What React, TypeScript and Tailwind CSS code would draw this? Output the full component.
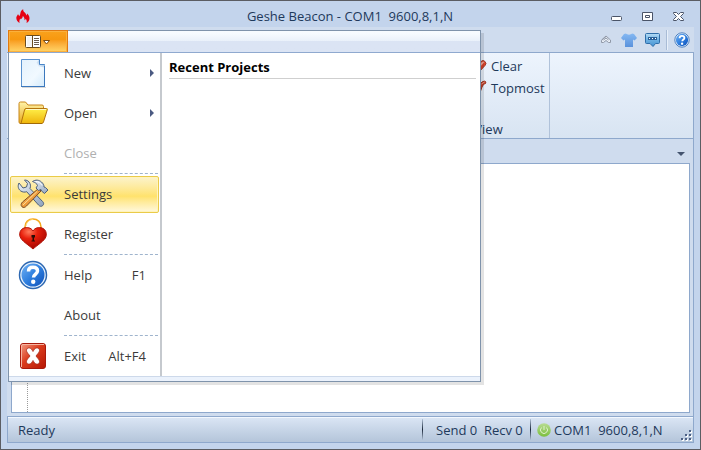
import React from "react";

function FlameIcon() {
  return (
    <svg width="14" height="15" viewBox="0 0 14 15">
      <path
        d="M3.6 14C1.5 13 .2 11 .3 8.8.4 7.2 1.4 6.4 2 5.2c.8.6 1 1.4 1 2C4.200 6.200 4.200 4.600 4.600 3.200 5 1.800 5.800.800 7.200.200c-.2 1.600.6 2.400 1.600 3.400.8.8 1.400 1.800 1.400 2.800.6-.4.9-1.200.8-1.800 1.600 1.400 2.600 3 2.500 5-.1 2-1.200 3.600-3 4.400.6-1.600.2-3-.8-4.200-.2.8-.6 1.200-1.200 1.500.2-1.900-.4-3.300-1.700-4.300 0 1.800-1.200 2.400-2 3.600-.2-.3-.4-.6-.5-1-.8 1.500-1.200 2.900-.7 4.400z"
        fill="#e60012"
      />
    </svg>
  );
}

function AppMenuIcon() {
  return (
    <svg width="26" height="13" viewBox="0 0 26 13">
      <rect x=".5" y=".5" width="15" height="12" rx="1" fill="#fff" stroke="#6b4c1e" />
      <rect x="2" y="2" width="5" height="9" fill="#f3f3f3" />
      <path d="M7.500 1v11" stroke="#6b4c1e" />
      <path d="M9 3.500h5M9 5.500h5M9 7.500h5M9 9.500h5" stroke="#6b5b4c" />
      <path d="M18.500 5.500h6l-3 3.500z" fill="#fff" stroke="#7a4a10" />
    </svg>
  );
}

function NewIcon() {
  return (
    <svg width="28" height="30" viewBox="0 0 28 30">
      <defs>
        <linearGradient id="page" x1="0" y1="0" x2="1" y2="1">
          <stop offset="0" stopColor="#e3f1fc" />
          <stop offset=".6" stopColor="#f1f9ff" />
          <stop offset="1" stopColor="#d3eafb" />
        </linearGradient>
        <linearGradient id="fold" x1="0" y1="1" x2="1" y2="0">
          <stop offset="0" stopColor="#fff" />
          <stop offset="1" stopColor="#7fb0e0" />
        </linearGradient>
      </defs>
      <path d="M3 29.500h24" stroke="#000" opacity=".15" />
      <path d="M2.500 1.500h18v5h5v22h-23z" fill="url(#page)" stroke="#5b93d0" />
      <path d="M20.500 1.500v5h5v3l-6-1-2-4z" fill="url(#fold)" />
      <path d="M20.500 1.500v5h5" fill="none" stroke="#4a86c8" />
      <path d="M2 28.500h24M25.500 8v21" stroke="#3c78bd" />
    </svg>
  );
}

function OpenIcon() {
  return (
    <svg width="30" height="24" viewBox="0 0 30 24">
      <defs>
        <linearGradient id="folder" x1="0" y1="0" x2="0" y2="1">
          <stop offset="0" stopColor="#fff04a" />
          <stop offset="1" stopColor="#eeb40a" />
        </linearGradient>
        <linearGradient id="folderBack" x1="0" y1="0" x2="0" y2="1">
          <stop offset="0" stopColor="#fff3a8" />
          <stop offset="1" stopColor="#e8a91a" />
        </linearGradient>
      </defs>
      <path
        d="M1 21V2.500Q1 1 2.500 1h5L10 4h14q1.500 0 1.500 1.500V9L22.500 22.500h-20q-1.500 0-1.500-1.500z"
        fill="url(#folderBack)"
        stroke="#c8861a"
      />
      <path
        d="M6.500 9q.3-1.500 1.500-1.500h20.500q1.200 0 .8 1.200L25.500 21q-.5 1.500-2 1.500h-19q-1.500 0-1.200-1.200z"
        fill="url(#folder)"
        stroke="#b4740c"
      />
      <path d="M8 8.500h20" fill="none" stroke="#fffac4" />
      <path d="M2 22.500h22" stroke="#a16a08" />
    </svg>
  );
}

function SettingsIcon() {
  return (
    <svg width="32" height="30" viewBox="0 0 32 30">
      <defs>
        <linearGradient id="steel" x1="0" y1="0" x2="1" y2="1">
          <stop offset="0" stopColor="#edf3f9" />
          <stop offset="1" stopColor="#8fa3bd" />
        </linearGradient>
        <linearGradient id="wood" x1="0" y1="0" x2="1" y2="1">
          <stop offset="0" stopColor="#ffc96b" />
          <stop offset="1" stopColor="#dc7412" />
        </linearGradient>
      </defs>
      <path
        d="M2 4c-1.500 3-.8 6 1.500 7.800 2 1.500 4.300 1.600 6.200.9L21.500 26c1.300 1.500 3 1.800 4.200.6 1.300-1.200 1.200-2.800 0-4L13 9.500c.9-2.200.6-4.600-1-6.500C10.800 1.600 9.200 1 7.500 1l3 3.500-1 3.500-3.500 1L2 4z"
        fill="url(#steel)"
        stroke="#4c5f7a"
      />
      <path
        d="M21.500 9.500L24 12 9.500 27c-1.500 1.500-3 2-4.500.8-1.500-1.400-1-3.300.5-4.800z"
        fill="url(#wood)"
        stroke="#7c4b22"
      />
      <path d="M20 12.500L6 26" stroke="#ffdc98" />
      <path
        d="M15.500 2.500C18.500.5 22 .8 24.500 3c1.800 1.600 2.500 3 2.500 5l1.500.5 2.500 2.500-3.500 3.500-3-2.500-.5-1.500-2.500 1-2.500-2.500 1.500-2.500C20 4.500 18 3.500 15.500 2.500z"
        fill="url(#steel)"
        stroke="#4c5f7a"
      />
      <path d="M18.500 2.500c3 0 5 1.500 6.500 4" fill="none" stroke="#fff" />
    </svg>
  );
}

function RegisterIcon() {
  return (
    <svg width="30" height="32" viewBox="0 0 30 32">
      <defs>
        <radialGradient id="heart" cx=".35" cy=".2" r=".8">
          <stop offset="0" stopColor="#ff7a5a" />
          <stop offset=".4" stopColor="#e8200c" />
          <stop offset="1" stopColor="#a30500" />
        </radialGradient>
      </defs>
      <path d="M7 13V9c0-5 3.500-8 8-8s8 3 8 8v4" fill="none" stroke="#f5a81c" strokeWidth="1.500" />
      <path d="M8 8c.5-4 3.500-6.500 7-6.500" fill="none" stroke="#ffd873" />
      <path
        d="M15 13c2-3.500 6-4 9-3 3.500 1.200 5 4.800 4 8.500-1.500 4.500-8 8-13 12.500C10 26.500 3.500 23 2 18.500 1 14.800 2.500 11.200 6 10c3-1 7-.5 9 3z"
        fill="url(#heart)"
        stroke="#b01408"
      />
      <path d="M13.500 17h3.500v2.500h-1v3h1v1h-3.500v-1h1v-3h-1z" fill="#2a0c06" />
    </svg>
  );
}

function HelpIcon({ size = 30 }: { size?: number }) {
  return (
    <svg width={size} height={size} viewBox="0 0 30 30">
      <defs>
        <linearGradient id="help" x1="0" y1="0" x2="1" y2="1">
          <stop offset="0" stopColor="#72b2f4" />
          <stop offset=".5" stopColor="#2f7fdf" />
          <stop offset="1" stopColor="#0d4fb8" />
        </linearGradient>
      </defs>
      <circle cx="15" cy="15" r="13.500" fill="#e8f2fc" stroke="#2d68b2" strokeWidth="1.500" />
      <circle cx="15" cy="15" r="11.500" fill="url(#help)" />
      <path
        d="M10.500 11.500c0-3 2-4.200 4.500-4.200s4.500 1.200 4.500 3.800c0 3-4 3-4 6.400"
        fill="none"
        stroke="#fff"
        strokeWidth="3.500"
      />
      <circle cx="15.200" cy="21.800" r="2.200" fill="#fff" />
    </svg>
  );
}

function ExitIcon() {
  return (
    <svg width="28" height="28" viewBox="0 0 28 28">
      <defs>
        <linearGradient id="exit" x1="0" y1="0" x2="1" y2="1">
          <stop offset="0" stopColor="#f3a088" />
          <stop offset=".45" stopColor="#db3c1d" />
          <stop offset="1" stopColor="#b51603" />
        </linearGradient>
      </defs>
      <rect x="1.500" y="1.500" width="25" height="25" rx="2.500" fill="url(#exit)" stroke="#a81a0c" />
      <path d="M2.500 25V4q0-1.500 1.500-1.500h21" fill="none" stroke="#f7b5a2" />
      <path
        d="M7.500 8.500c0-2 1.500-2.800 3-2.500 1.800.3 2.500 2 3.500 3.500C15 8 15.700 6.300 17.500 6c1.500-.3 3 .5 3 2.500 0 2-2.200 3.500-3.500 5.500 1.300 2 3.500 3.500 3.500 5.500s-1.500 2.800-3 2.500c-1.800-.3-2.500-2-3.500-3.500-1 1.500-1.700 3.200-3.500 3.500-1.500.3-3-.5-3-2.500s2.200-3.500 3.500-5.500c-1.300-2-3.500-3.500-3.500-5.500z"
        fill="#fff"
        stroke="#a83020"
        strokeWidth=".8"
      />
    </svg>
  );
}

function ShirtIcon() {
  return (
    <svg width="16" height="14" viewBox="0 0 16 14">
      <defs>
        <linearGradient id="shirt" x1="0" y1="0" x2="0" y2="1">
          <stop offset="0" stopColor="#84b8f2" />
          <stop offset="1" stopColor="#5a92dc" />
        </linearGradient>
      </defs>
      <path d="M5 .5C6 2 10 2 11 .500l2 .500 3 4-2.500 2.500L12 6.500V14H4V6.500L2.500 7.500 0 5l3-4z" fill="url(#shirt)" />
    </svg>
  );
}

function ChatIcon() {
  return (
    <svg width="15" height="14" viewBox="0 0 15 14">
      <defs>
        <linearGradient id="chat" x1="0" y1="0" x2="0" y2="1">
          <stop offset="0" stopColor="#b6dcf5" />
          <stop offset=".5" stopColor="#6db0e2" />
          <stop offset="1" stopColor="#4492d2" />
        </linearGradient>
      </defs>
      <path d="M1.500.500h12q1 0 1 1v8q0 1-1 1h-3L8 13.500l-3-3H1.500q-1 0-1-1v-8q0-1 1-1z" fill="url(#chat)" stroke="#2f6da8" />
      <path d="M3 4h3v3H3zM6 4h3v3H6zM9 4h3v3H9z" fill="#2a6098" />
      <path d="M4 5h1v1H4zM7 5h1v1H7zM10 5h1v1h-1z" fill="#fff" />
    </svg>
  );
}

function EraserIcon() {
  return (
    <svg width="16" height="16" viewBox="0 0 16 16">
      <path d="M2 12L10 3.500q2-2 4 0 2 2 0 4L8 14q-2 1-4 0z" fill="#d8432a" stroke="#a03a2a" />
      <path d="M6 9l5-5q1-1 2.500 0L8 10z" fill="#f5a898" />
    </svg>
  );
}

function PinIcon() {
  return (
    <svg width="16" height="16" viewBox="0 0 16 16">
      <path d="M9 4q2-3 5-3l1 2q-3 1-4 4-1 4-3 6l-3-1q3-3 4-8z" fill="#c4402a" stroke="#9c3420" />
      <path d="M10.500 4l3-2" stroke="#f0a090" />
    </svg>
  );
}

function PowerIcon() {
  return (
    <svg width="14" height="14" viewBox="0 0 14 14">
      <defs>
        <linearGradient id="power" x1="0" y1="0" x2="0" y2="1">
          <stop offset="0" stopColor="#b8dc94" />
          <stop offset="1" stopColor="#7bbf3c" />
        </linearGradient>
      </defs>
      <circle cx="7" cy="7" r="6.800" fill="url(#power)" />
      <path d="M4.500 4.500a3.500 3.500 0 1 0 5 0M7 3v4" fill="none" stroke="#dff0cc" />
    </svg>
  );
}

type MenuItemProps = {
  label: string;
  icon?: React.ReactNode;
  shortcut?: string;
  submenu?: boolean;
  active?: boolean;
  disabled?: boolean;
};

function MenuItem({ label, icon, shortcut, submenu, active, disabled }: MenuItemProps) {
  return (
    <li className="flex h-10 px-px pt-0.5 pb-px">
      <button
        type="button"
        disabled={disabled}
        className={
          active
            ? "flex w-full items-center rounded-xs border border-[#eacb48] bg-linear-to-b from-[#fcf3cb] via-[#ffe26c] via-55% to-[#fff8dc] pr-1 pb-0.5 text-[#3b3b3b] shadow-[inset_0_0_0_1px_#fff3bd]"
            : "flex w-full items-center border border-transparent pr-1 pb-0.5 text-[#3b3b3b] disabled:text-[#b0b0b0]"
        }
      >
        <span className="flex w-11 justify-center">{icon}</span>
        <span className="pl-[9px]">{label}</span>
        {shortcut && <span className="ml-auto pr-2">{shortcut}</span>}
        {submenu && (
          <svg width="4" height="8" viewBox="0 0 4 8" className="ml-auto">
            <path d="M0 0l4 4-4 4z" fill="#4a5a82" />
          </svg>
        )}
      </button>
    </li>
  );
}

function MenuDivider() {
  return <li role="separator" className="mr-0.5 ml-[55px] h-px border-t border-dashed border-[#9fb4cd]" />;
}

function AppMenu() {
  return (
    <div className="absolute top-[3px] left-px z-10 w-[473px] border border-[#7f93ab] bg-white shadow-[3px_3px_0_rgba(0,0,0,0.11)]">
      <div className="flex h-[22px] border-b border-[#8fa9cf] bg-linear-to-b from-[#f7fbff] from-10% via-[#e9f0fa] via-50% to-[#dbe4f4] to-50%">
        <button
          type="button"
          aria-label="Application menu"
          className="-mt-px -ml-px flex h-[22px] w-[60px] items-center justify-center border border-b-0 border-[#e07a10] bg-linear-to-b from-[#f9a21c] via-[#f7980f] via-40% to-[#ffd668] shadow-[inset_0_0_0_1px_#fbb03c]"
        >
          <AppMenuIcon />
        </button>
      </div>
      <div className="flex">
        <ul className="w-[151px]">
          <MenuItem label="New" icon={<NewIcon />} submenu />
          <MenuItem label="Open" icon={<OpenIcon />} submenu />
          <MenuItem label="Close" disabled />
          <MenuDivider />
          <MenuItem label="Settings" icon={<SettingsIcon />} active />
          <MenuItem label="Register" icon={<RegisterIcon />} />
          <MenuDivider />
          <MenuItem label="Help" icon={<HelpIcon />} shortcut="F1" />
          <MenuItem label="About" />
          <MenuDivider />
          <MenuItem label="Exit" icon={<ExitIcon />} shortcut="Alt+F4" />
        </ul>
        <div className="flex-1 border-l-2 border-[#c5c9ce] pt-1 pr-1 pl-[7px]">
          <h2 className="border-b border-[#cfcfcf] pb-px font-bold text-black">Recent Projects</h2>
        </div>
      </div>
      <div className="h-[5px] border-t border-[#cdd9ea] bg-[#ebf2fc]" />
    </div>
  );
}

function TitleBar() {
  return (
    <header className="grid h-[26px] grid-cols-[1fr_auto_1fr] items-center pt-1 pr-4 pl-[15px]">
      <FlameIcon />
      <h1>Geshe Beacon - COM1&nbsp; 9600,8,1,N</h1>
      <div className="flex items-center justify-end gap-5 text-[#4a5468]">
        <button type="button" aria-label="Minimize">
          <svg width="11" height="11" viewBox="0 0 11 11">
            <rect x=".5" y="5.500" width="10" height="4" rx="1" fill="#fff" stroke="currentColor" />
          </svg>
        </button>
        <button type="button" aria-label="Maximize">
          <svg width="11" height="11" viewBox="0 0 11 11">
            <path d="M.5 1.500h10v8H.5z" fill="#fff" stroke="currentColor" />
            <path d="M3.500 4.500h4v2h-4z" fill="#fff" stroke="currentColor" />
          </svg>
        </button>
        <button type="button" aria-label="Close window">
          <svg width="11" height="11" viewBox="0 0 11 11">
            <path
              d="M.5 1.500h3l2 2 2-2h3v1l-3 3 3 3v1h-3l-2-2-2 2h-3v-1l3-3-3-3z"
              fill="#fff"
              stroke="currentColor"
            />
          </svg>
        </button>
      </div>
    </header>
  );
}

function RibbonTools() {
  return (
    <div className="flex h-[25px] items-center justify-end bg-[#cfdcee] pr-1">
      <button type="button" aria-label="Collapse ribbon">
        <svg width="10" height="9" viewBox="0 0 10 9" className="mr-2.5">
          <path
            d="M.5 5L5 1l4.500 4v2.500H7.500L5 5.500 2.500 7.500h-2V5.500L5 1.500"
            fill="#e8eef6"
            stroke="#9099a8"
          />
          <path d="M2.500 5L5 3l2.500 2" fill="none" stroke="#9099a8" />
        </svg>
      </button>
      <button type="button" aria-label="Skin" className="mr-2">
        <ShirtIcon />
      </button>
      <button type="button" aria-label="Feedback">
        <ChatIcon />
      </button>
      <span className="mx-1.5 h-5 w-0.5 border-l border-[#a9bcd6] bg-[#e8f0fa]" />
      <button type="button" aria-label="Help">
        <HelpIcon size={16} />
      </button>
    </div>
  );
}

function Ribbon() {
  return (
    <div className="flex h-[87px] border-t border-r border-b border-[#8ea8cc] bg-linear-to-b from-[#edf4fd] to-[#d8e4f2]">
      <section className="ml-[421px] flex w-[122px] flex-col border-r border-[#b0c2da] pt-0.5 pb-px">
        <button type="button" className="flex h-[22px] items-center gap-1 pl-[43px]">
          <EraserIcon />
          Clear
        </button>
        <button type="button" className="flex h-[22px] items-center gap-1 pl-[43px]">
          <PinIcon />
          Topmost
        </button>
        <h3 className="mt-auto text-center leading-4">View</h3>
      </section>
    </div>
  );
}

function StatusBar() {
  return (
    <footer className="flex h-[27px] items-stretch border border-[#8ea8cc] bg-linear-to-b from-[#dbe6f5] to-[#b4c5da] shadow-[inset_0_1px_0_#f3f8fe]">
      <span className="flex flex-1 items-center pl-2.5">Ready</span>
      <Separator />
      <span className="flex w-[107px] items-center pl-[13px]">Send 0&nbsp; Recv 0</span>
      <Separator />
      <span className="flex w-[150px] items-center gap-[3px] pl-1.5">
        <PowerIcon />
        COM1&nbsp; 9600,8,1,N
      </span>
      <svg width="12" height="12" viewBox="0 0 12 12" className="self-end">
        <path d="M9 1h2v2H9zM9 5h2v2H9zM5 5h2v2H5zM9 9h2v2H9zM5 9h2v2H5zM1 9h2v2H1z" fill="#fff" />
        <path d="M8 0h2v2H8zM8 4h2v2H8zM4 4h2v2H4zM8 8h2v2H8zM4 8h2v2H4zM0 8h2v2H0z" fill="#4d6185" />
      </svg>
    </footer>
  );
}

function Separator() {
  return <span className="my-0.5 w-px bg-linear-to-b from-[#b4c5da] via-[#1e2a3c] to-[#b4c5da]" />;
}

export default function App() {
  return (
    <div className="flex min-h-screen flex-col border border-[#5b5d63] bg-[#c3d4ec] font-['Open_Sans','Noto_Sans',sans-serif] text-[13px] leading-5 text-[#1e395b]">
      <TitleBar />
      <main className="relative mx-1.5 mb-1.5 flex flex-1 flex-col bg-[#cfdcee]">
        <AppMenu />
        <RibbonTools />
        <Ribbon />
        <div className="flex h-6 items-center justify-end border-r border-[#8ea8cc] pt-1.5 pr-2">
          <button type="button" aria-label="Open documents">
            <svg width="8" height="4" viewBox="0 0 8 4">
              <path d="M0 0h8L4 4z" fill="#44546f" />
            </svg>
          </button>
        </div>
        <div className="flex min-h-[250px] flex-1 border-r border-[#8ea8cc] pr-[3px] pb-[3px] pl-1">
          <div className="flex flex-1 border border-[#8ea8cc] bg-white pl-[15px]">
            <div className="border-l border-dotted border-[#9a9a9a]" />
          </div>
        </div>
        <StatusBar />
      </main>
    </div>
  );
}
